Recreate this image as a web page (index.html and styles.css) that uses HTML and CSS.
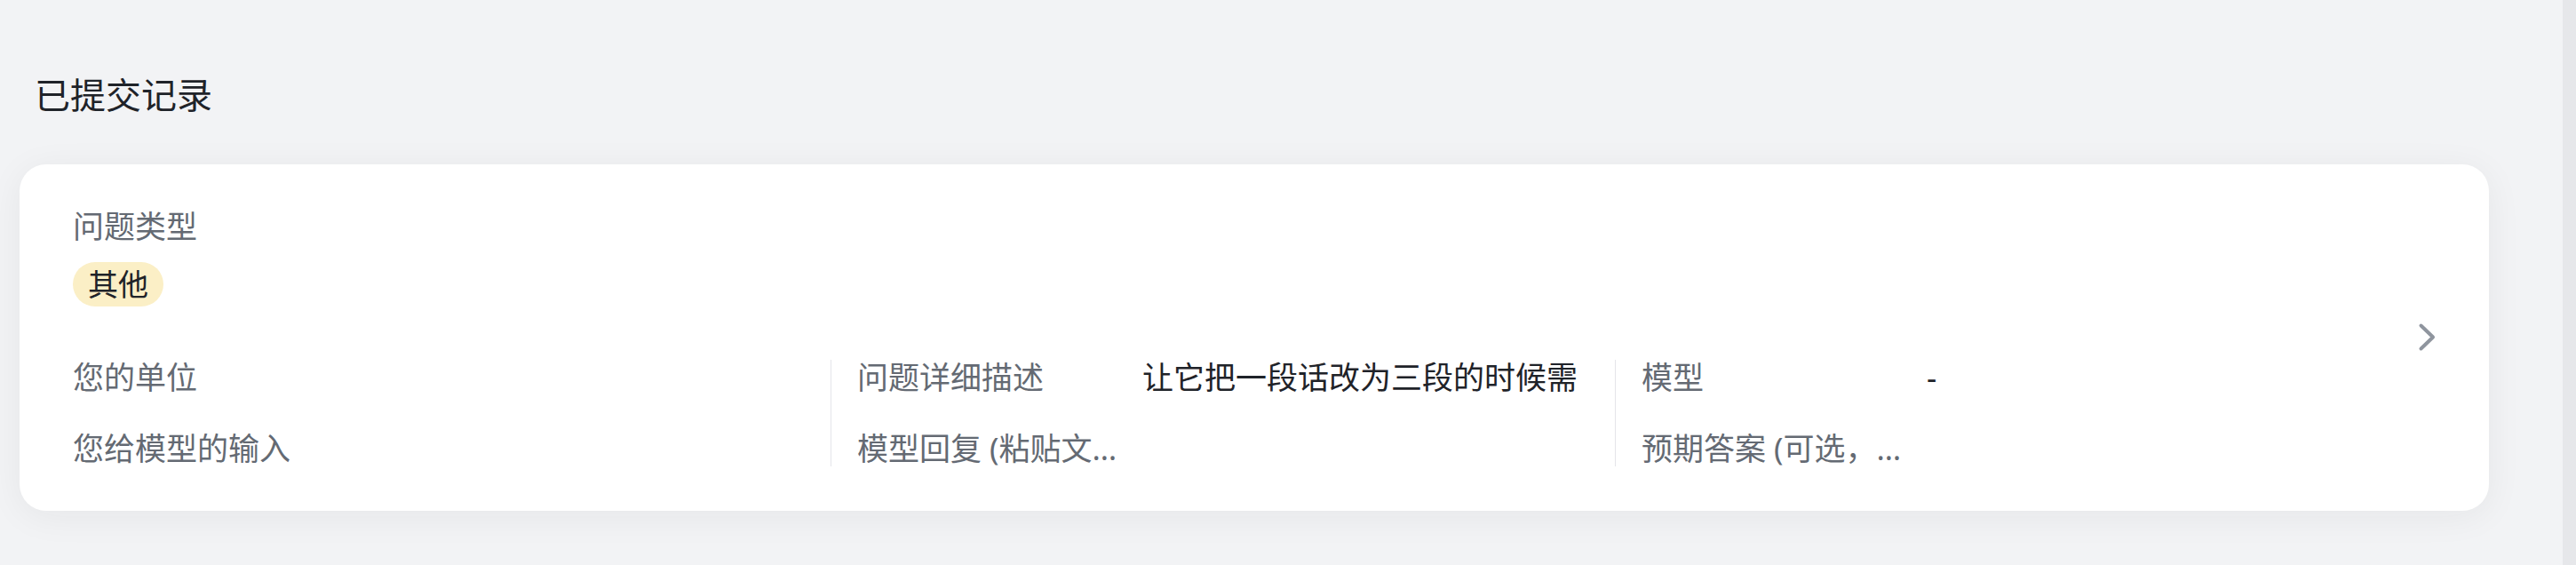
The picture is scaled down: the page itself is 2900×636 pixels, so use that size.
FILE: index.html
```html
<!DOCTYPE html>
<html lang="zh-CN">
<head>
<meta charset="utf-8">
<title>已提交记录</title>
<link rel="stylesheet" href="styles.css">
</head>
<body>
<div class="page">
  <main class="main">
    <h2 class="title">已提交记录</h2>
    <div class="card">
      <div class="card-body">
        <div class="type-block">
          <div class="type-label">问题类型</div>
          <span class="tag">其他</span>
        </div>
        <div class="fields">
          <div class="col col-first">
            <div class="field"><span class="f-label">您的单位</span><span class="f-value"></span></div>
            <div class="field"><span class="f-label">您给模型的输入</span><span class="f-value"></span></div>
          </div>
          <div class="col">
            <div class="field"><span class="f-label">问题详细描述</span><span class="f-value">让它把一段话改为三段的时候需</span></div>
            <div class="field"><span class="f-label">模型回复 (粘贴文本或截图)</span><span class="f-value"></span></div>
          </div>
          <div class="col">
            <div class="field"><span class="f-label">模型</span><span class="f-value">-</span></div>
            <div class="field"><span class="f-label">预期答案 (可选，如有请填写)</span><span class="f-value"></span></div>
          </div>
        </div>
      </div>
      <div class="chev">
        <svg width="20" height="34" viewBox="0 0 20 34" aria-hidden="true"><path d="M3.5 3.5 L17 16.5 L3.5 29.5" fill="none" stroke="#8f959e" stroke-width="4" stroke-linecap="round" stroke-linejoin="round"/></svg>
      </div>
    </div>
  </main>
  <aside class="edge"></aside>
</div>
</body>
</html>
```

FILE: styles.css
```css
* { box-sizing: border-box; }
html, body { margin: 0; padding: 0; }
body {
  background: #f2f3f5;
  font-family: "Noto Sans", "Noto Sans CJK SC", sans-serif;
  color: #1f2329;
  width: 2900px;
  height: 636px;
  overflow: hidden;
}
.page {
  display: flex;
  height: 636px;
}
.main {
  flex: 1;
  padding: 79px 83px 0 22px;
}
.edge {
  width: 15px;
  flex: none;
  background: #e6e7ea;
  box-shadow: -30px 0 50px -6px rgba(31, 35, 41, 0.05);
}
.title {
  margin: 0 0 50px;
  padding-left: 17px;
  font-size: 40px;
  line-height: 56px;
  font-weight: 400;
  color: #1f2329;
}
.card {
  display: flex;
  align-items: center;
  background: #fff;
  border-radius: 30px;
  padding: 50px 50px 50px 30px;
  box-shadow: 0 6px 40px rgba(31, 35, 41, 0.06);
}
.card-body {
  flex: 1;
  min-width: 0;
}
.type-block {
  padding-left: 30px;
}
.type-label {
  font-size: 35px;
  line-height: 40px;
  color: #646a73;
}
.tag {
  display: inline-block;
  margin-top: 20px;
  height: 50px;
  line-height: 50px;
  padding: 0 17px;
  border-radius: 25px;
  background: #fbefc6;
  color: #1f2329;
  font-size: 34px;
}
.fields {
  margin-top: 60px;
  display: grid;
  grid-template-columns: repeat(3, 1fr);
}
.col {
  display: flex;
  flex-direction: column;
  gap: 40px;
  border-left: 1px solid #e4e5e9;
  padding: 0 30px 0 29px;
  min-width: 0;
}
.col-first {
  border-left-color: transparent;
}
.field {
  display: flex;
  align-items: center;
  font-size: 35px;
  height: 40px;
}
.f-label {
  flex: 0 0 300px;
  width: 300px;
  line-height: 52px;
  color: #646a73;
  white-space: nowrap;
  overflow: hidden;
  text-overflow: ellipsis;
}
.f-value {
  flex: 1;
  min-width: 0;
  margin-left: 21px;
  line-height: 52px;
  white-space: nowrap;
  overflow: hidden;
  color: #1f2329;
}
.chev {
  flex: none;
  width: 51px;
  padding-left: 21px;
  display: flex;
  align-items: center;
}
.chev svg { display: block; }
```
